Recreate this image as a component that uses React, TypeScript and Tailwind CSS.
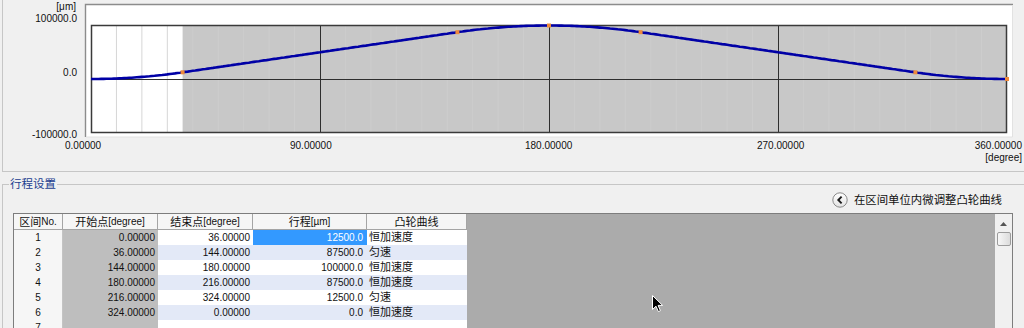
import React from 'react'

const rows = [
  { no: '1', start: '0.00000', end: '36.00000', stroke: '12500.0', curve: '恒加速度' },
  { no: '2', start: '36.00000', end: '144.00000', stroke: '87500.0', curve: '匀速' },
  { no: '3', start: '144.00000', end: '180.00000', stroke: '100000.0', curve: '恒加速度' },
  { no: '4', start: '180.00000', end: '216.00000', stroke: '87500.0', curve: '恒加速度' },
  { no: '5', start: '216.00000', end: '324.00000', stroke: '12500.0', curve: '匀速' },
  { no: '6', start: '324.00000', end: '0.00000', stroke: '0.0', curve: '恒加速度' },
  { no: '7', start: '', end: '', stroke: '', curve: '' },
]

// plot area in page pixels
const X0 = 91
const X1 = 1007
const YT = 25.5
const YB = 132.5
const YZ = 79

const sx = (d: number) => X0 + (d * (X1 - X0)) / 360
const sy = (s: number) => YZ - (s * (YZ - YT)) / 100000

// cam displacement for a given angle
function pos(d: number) {
  if (d <= 36) {
    const u = d / 36
    return 12500 * u * u
  }
  if (d <= 144) return 12500 + ((d - 36) / 108) * 75000
  if (d <= 180) {
    const u = (d - 144) / 36
    return 87500 + 12500 * (1 - (1 - u) * (1 - u))
  }
  if (d <= 216) {
    const u = (d - 180) / 36
    return 100000 - 12500 * u * u
  }
  if (d <= 324) return 87500 - ((d - 216) / 108) * 75000
  const u = (d - 324) / 36
  return 12500 * (1 - u) * (1 - u)
}

function Chart() {
  const pts: string[] = []
  for (let d = 0; d <= 360; d += 1) pts.push(`${sx(d).toFixed(1)},${sy(pos(d)).toFixed(1)}`)
  const minor = Array.from({ length: 35 }, (_, i) => (i + 1) * 10).filter((d) => d % 90 !== 0)
  const marks = [36, 144, 180, 216, 324, 360]
  const xLabels = [
    { x: 65, t: '0.00000', a: 'start' },
    { x: 290, t: '90.00000', a: 'start' },
    { x: 525, t: '180.00000', a: 'start' },
    { x: 757, t: '270.00000', a: 'start' },
    { x: 1022, t: '360.00000', a: 'end' },
  ] as const

  return (
    <svg width={1021} height={171} className="block">
      <g transform="translate(-3 0)" fontFamily="'Liberation Sans', sans-serif" fontSize={10} fill="#111">
        {/* white panel */}
        <rect x={85} y={4} width={928} height={133} fill="#ffffff" />
        <path d="M85.5 137V4.5H1013" stroke="#8c8c8c" strokeWidth={1.4} fill="none" />
        <path d="M1012.5 5V137H86" stroke="#e2e2e2" fill="none" />

        {/* plot */}
        <rect x={X0} y={YT} width={X1 - X0} height={YB - YT} fill="#c8c8c8" />
        <rect x={X0} y={YT} width={sx(36) - X0} height={YB - YT} fill="#ffffff" />
        {minor.map((d) => (
          <line
            key={d}
            x1={sx(d)}
            x2={sx(d)}
            y1={YT}
            y2={YB}
            stroke={d < 36 ? '#d6d6d6' : '#cdcdcd'}
            strokeWidth={1}
          />
        ))}
        {[90, 180, 270].map((d) => (
          <line key={d} x1={Math.round(sx(d)) + 0.5} x2={Math.round(sx(d)) + 0.5} y1={YT} y2={YB} stroke="#2e2e2e" />
        ))}
        <line x1={X0} x2={X1} y1={YZ + 0.5} y2={YZ + 0.5} stroke="#2e2e2e" />
        <rect x={X0 + 0.5} y={YT} width={X1 - X0 - 1} height={YB - YT} fill="none" stroke="#3a3a3a" strokeWidth={1.5} />

        {/* curve */}
        <polyline points={pts.join(' ')} fill="none" stroke="#0000a6" strokeWidth={2.6} strokeLinejoin="round" />
        {marks.map((d) => (
          <rect key={d} x={sx(d) - 2} y={sy(pos(d)) - 2} width={4} height={4} fill="#ee8a3c" />
        ))}

        {/* axis labels */}
        <text x={76} y={10} textAnchor="end">[μm]</text>
        <text x={77} y={22} textAnchor="end">100000.0</text>
        <text x={77} y={76} textAnchor="end">0.0</text>
        <text x={77} y={137.5} textAnchor="end">-100000.0</text>
        {xLabels.map((l) => (
          <text key={l.t} x={l.x} y={149} textAnchor={l.a}>
            {l.t}
          </text>
        ))}
        <text x={1022} y={161} textAnchor="end">[degree]</text>
      </g>
    </svg>
  )
}

function TableGrid() {
  const cols = 'grid grid-cols-[49px_95px_95px_114px_100px]'
  const head = 'flex h-[16px] items-center justify-center border-r border-b border-[#a5a5a5] bg-[#f6f6f6] leading-[16px]'
  return (
    <div className="w-[453px] shrink-0">
      <div className={cols}>
        <div className={head}>
          <span className="text-[11px]">区间</span>No.
        </div>
        <div className={head}>
          <span className="text-[11px]">开始点</span>[degree]
        </div>
        <div className={head}>
          <span className="text-[11px]">结束点</span>[degree]
        </div>
        <div className={head}>
          <span className="text-[11px]">行程</span>[µm]
        </div>
        <div className={head}>
          <span className="text-[11px]">凸轮曲线</span>
        </div>
      </div>
      {rows.map((r, i) => {
        const alt = i % 2 === 1 ? 'bg-[#e3e9f7]' : 'bg-white'
        const sel = i === 0
        return (
          <div key={r.no} className={`${cols} h-[15px] leading-[15px]`}>
            <div className="border-r border-b border-[#c4c4c4] bg-[#f6f6f6] text-center">{r.no}</div>
            <div className="border-b border-[#d9d9d9] bg-[#bebebe] pr-[3px] text-right">{r.start}</div>
            <div className={`${alt} pr-[3px] text-right`}>{r.end}</div>
            <div className={`${sel ? 'bg-[#3399ff] text-white' : alt} pr-[4px] text-right`}>{r.stroke}</div>
            <div className={`${alt} pl-[2px] text-[11px]`}>{r.curve}</div>
          </div>
        )
      })}
    </div>
  )
}

function Scrollbar() {
  return (
    <div className="flex w-[17px] shrink-0 flex-col items-center bg-[#f0f0f0] pt-[8px]">
      <svg width={7} height={4} className="block">
        <path d="M0 4L3.5 0L7 4Z" fill="#555" />
      </svg>
      <div className="mt-[6px] h-[14px] w-[14px] rounded-[2px] border border-[#9c9c9c] bg-gradient-to-r from-[#f7f7f7] to-[#dcdcdc]" />
    </div>
  )
}

export default function App() {
  return (
    <div className="relative h-[328px] w-[1024px] overflow-hidden bg-[#f0f0f0] font-['Liberation_Sans','Noto_Sans_CJK_SC',sans-serif] text-[10px] text-[#111]">
      <div className="ml-[2px] h-[172px] border-b border-l border-[#c6c6c6]">
        <Chart />
      </div>

      <fieldset className="mt-[5px] ml-[2px] h-[200px] border-t border-l border-[#c6c6c6]">
        <legend className="ml-[6px] px-[1px] text-[11.5px] leading-[14px] text-[#1b3d8f]">行程设置</legend>

        <div className="flex h-[18px] items-center justify-end pr-[22px]">
          <svg width={16} height={16} className="block">
            <defs>
              <linearGradient id="btn" x1="0" y1="0" x2="0" y2="1">
                <stop offset="0" stopColor="#ffffff" />
                <stop offset="1" stopColor="#e2e2e2" />
              </linearGradient>
            </defs>
            <circle cx={8} cy={8} r={7.2} fill="url(#btn)" stroke="#8a8a8a" />
            <path d="M9.6 4.7L6.3 8L9.6 11.3" fill="none" stroke="#1a1a1a" strokeWidth={1.9} />
          </svg>
          <span className="ml-[6px] text-[11.4px] leading-[18px]">在区间单位内微调整凸轮曲线</span>
        </div>

        <div className="mt-[4px] ml-[10px] flex h-[130px] w-[1000px] border border-[#7d7d7d] bg-[#ababab]">
          <TableGrid />
          <div className="flex-1" />
          <Scrollbar />
        </div>
      </fieldset>

      {/* mouse pointer */}
      <svg width={13} height={19} className="absolute left-[651px] top-[294px]">
        <path d="M1.5 1.5V15.5L5 12.2L7.4 17.6L9.4 16.7L7.1 11.4H11.6Z" fill="#000" stroke="#fff" strokeWidth={1} />
      </svg>
    </div>
  )
}
